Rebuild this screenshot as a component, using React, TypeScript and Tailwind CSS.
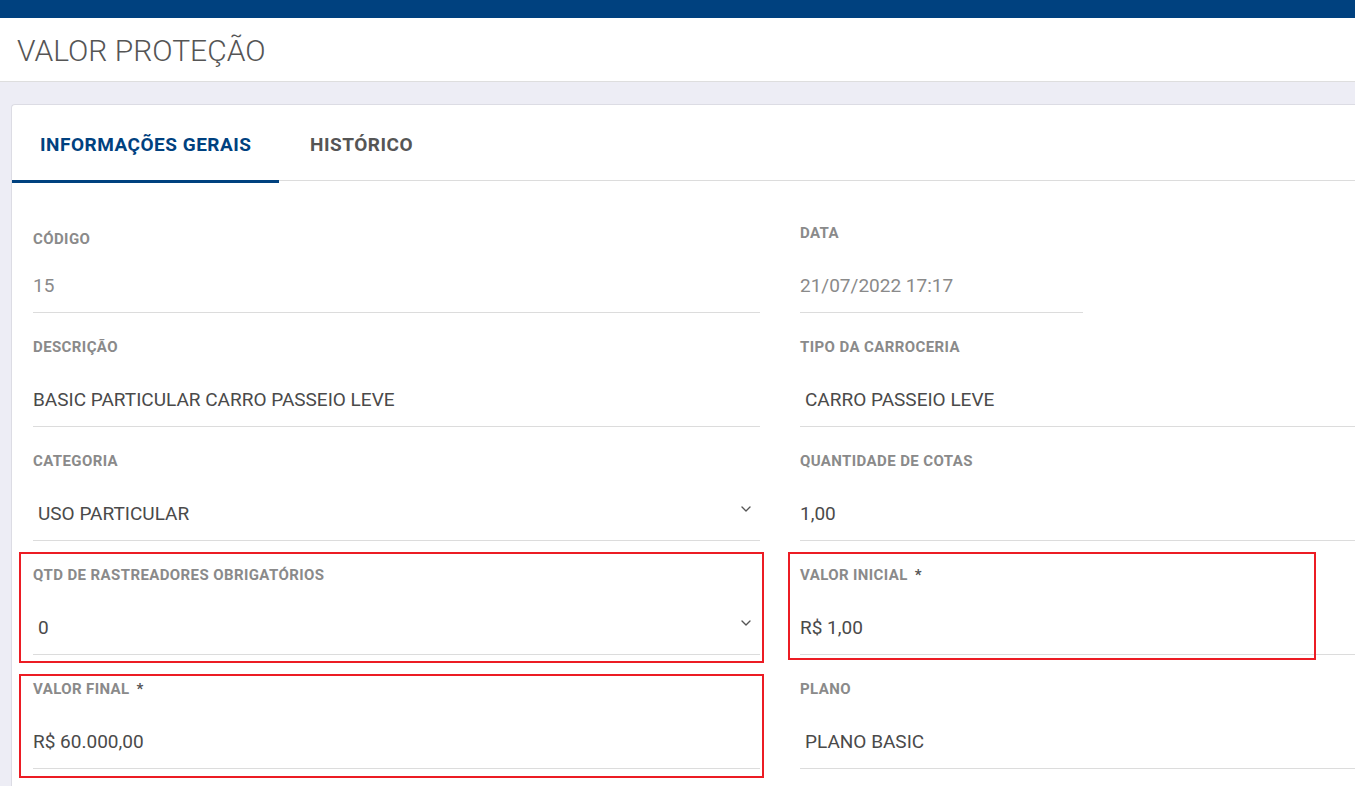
import { ChevronDown } from 'lucide-react';

type Field = {
  label: string;
  value: string;
  required?: boolean;
  select?: boolean;
  muted?: boolean;
  indent?: boolean;
  box?: string;
  line?: string;
  labelShift?: string;
};

const left: Field[] = [
  { label: 'CÓDIGO', value: '15', muted: true, labelShift: 'translate-y-[6px]' },
  { label: 'DESCRIÇÃO', value: 'BASIC PARTICULAR CARRO PASSEIO LEVE' },
  { label: 'CATEGORIA', value: 'USO PARTICULAR', select: true },
  {
    label: 'QTD DE RASTREADORES OBRIGATÓRIOS',
    value: '0',
    select: true,
    box: 'top-[-3px] left-[-14px] right-[-4px] h-[111px]',
  },
  {
    label: 'VALOR FINAL',
    value: 'R$ 60.000,00',
    required: true,
    box: 'top-[5px] left-[-14px] right-[-4px] h-[104px]',
  },
];

const right: Field[] = [
  { label: 'DATA', value: '21/07/2022 17:17', muted: true, line: 'w-[283px]' },
  { label: 'TIPO DA CARROCERIA', value: 'CARRO PASSEIO LEVE', indent: true },
  { label: 'QUANTIDADE DE COTAS', value: '1,00' },
  {
    label: 'VALOR INICIAL',
    value: 'R$ 1,00',
    required: true,
    box: 'top-[-3px] left-[-12px] w-[528px] h-[108px]',
  },
  { label: 'PLANO', value: 'PLANO BASIC', indent: true },
];

function FormField({ f }: { f: Field }) {
  return (
    <div className="relative h-[114px] pt-[12px]">
      <div
        className={`flex items-center gap-[7px] h-4 text-[15px] font-bold text-[#8a8a8a] tracking-[0.4px] ${
          f.labelShift ?? ''
        }`}
      >
        <span>{f.label}</span>
        {f.required && <span className="text-[#555]">*</span>}
      </div>
      <div
        className={`flex items-center justify-between mt-[18px] h-[54px] pt-[2px] ${
          f.select ? 'pl-[5px] pr-[6px]' : f.indent ? 'pl-[5px]' : ''
        } ${f.line ?? ''} border-b border-[#dcdcdc]`}
      >
        <span className={`text-[19px] ${f.muted ? 'text-[#8a8a8a]' : 'text-[#4a4a4a]'}`}>{f.value}</span>
        {f.select && <ChevronDown size={16} strokeWidth={2} className="text-[#555] -mt-3" />}
      </div>
      {f.box && <div className={`absolute ${f.box} border-2 border-[#ec1c24] pointer-events-none`} />}
    </div>
  );
}

export default function App() {
  return (
    <div className="w-[1355px] h-[786px] overflow-hidden bg-[#ededf5] font-['Roboto',sans-serif]">
      <div className="h-[18px] bg-[#00417f]" />
      <div className="h-[64px] bg-white border-b border-[#dedede] flex items-center pl-[17px] pt-[1px]">
        <h1 className="text-[30px] font-light text-[#555]">VALOR PROTEÇÃO</h1>
      </div>

      <div className="ml-[11px] mt-[22px] bg-white rounded-tl-[4px] border-l border-t border-[#dcdce4] h-[700px]">
        <div className="flex items-start h-[76px] border-b border-[#dcdcdc]">
          <div className="w-[267px] h-[78px] pl-[28px] pt-[5px] flex items-center border-b-[3px] border-[#00417f] text-[19px] font-bold text-[#00417f] tracking-[0.5px]">
            INFORMAÇÕES GERAIS
          </div>
          <div className="h-[75px] pl-[31px] pt-[6px] flex items-center text-[19px] font-bold text-[#555] tracking-[0.5px]">
            HISTÓRICO
          </div>
        </div>

        <div className="flex pt-[32px]">
          <div className="w-[727px] ml-[21px]">
            {left.map(f => (
              <FormField key={f.label} f={f} />
            ))}
          </div>
          <div className="flex-1 ml-[40px]">
            {right.map(f => (
              <FormField key={f.label} f={f} />
            ))}
          </div>
        </div>
      </div>
    </div>
  );
}
